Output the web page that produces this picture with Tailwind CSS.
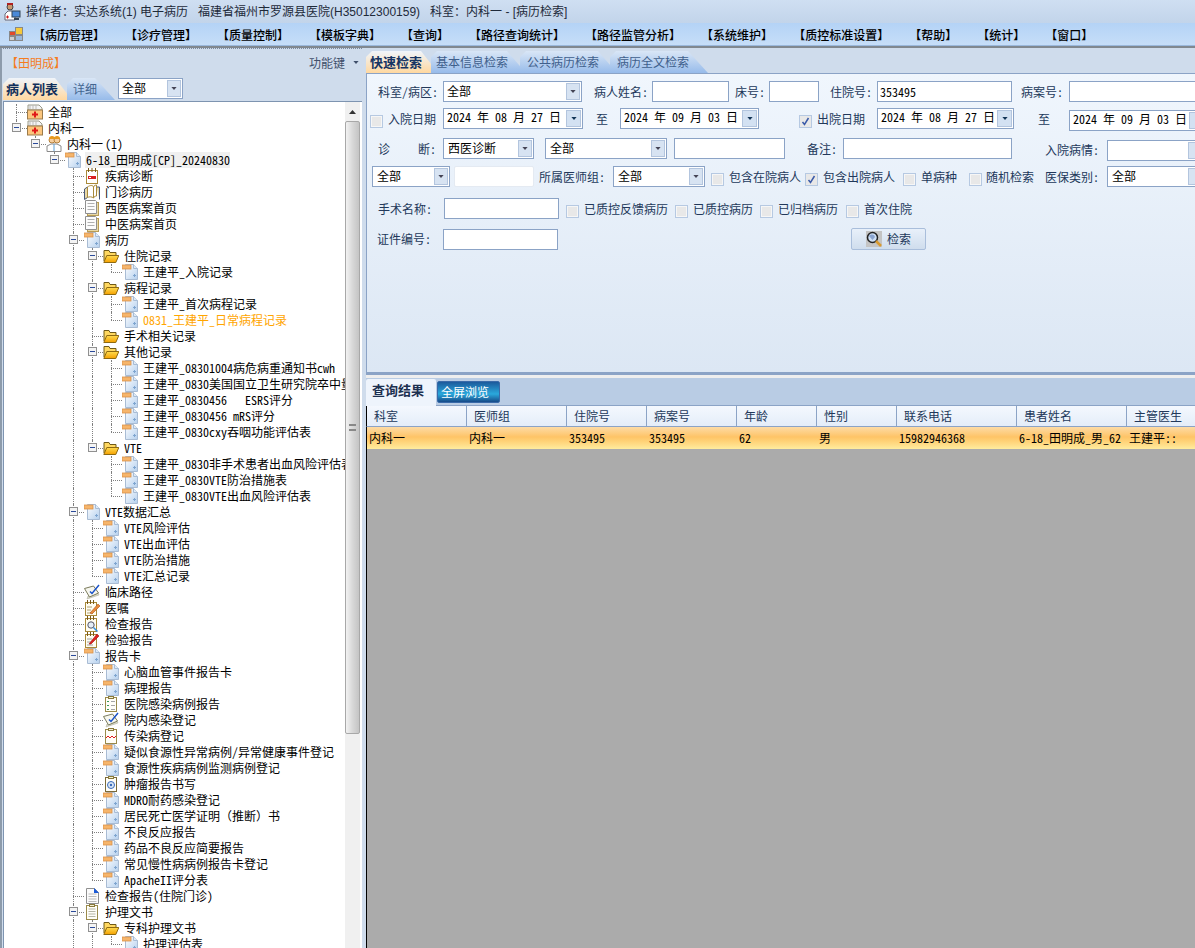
<!DOCTYPE html>
<html lang="zh-CN">
<head>
<meta charset="UTF-8">
<title>病历检索</title>
<script src="https://cdn.jsdelivr.net/npm/@tailwindcss/browser@4"></script>
</head>
<body class="w-[1195px] h-[948px] overflow-hidden font-['Noto_Sans_CJK_SC',sans-serif] [font-feature-settings:'hwid'] text-[12px] leading-4 text-black bg-[#cfdcec]">

<svg class="block w-0 h-0">
  <defs>
    <linearGradient id="pg" x1="0" y1="0" x2="1" y2="1"><stop offset="0" stop-color="#fff"/><stop offset="1" stop-color="#b5d0ee"/></linearGradient>
    <linearGradient id="fo" x1="0" y1="0" x2="0" y2="1"><stop offset="0" stop-color="#ffdc50"/><stop offset="1" stop-color="#f5a000"/></linearGradient>
    <symbol id="i-doc" viewBox="0 0 16 16"><path d="M3.500.5h8l4 4v11h-12z" fill="url(#pg)" stroke="#a9bcd4"/><path d="M11.500.5v4h4" fill="#dfeaf6" stroke="#a9bcd4"/><rect x="0" y="1" width="9" height="4" fill="#f6b56b" stroke="#d9924a" stroke-width=".8"/><path d="M11 11.500h3M12.500 10v3" stroke="#7fa5cf"/></symbol>
    <symbol id="i-folder" viewBox="0 0 16 16"><path d="M1 13V2.500h5l1 2h6V8" fill="#ffd860" stroke="#6f5a18"/><path d="M.8 14.500l3-7h12l-3 7z" fill="url(#fo)" stroke="#8f6a10"/></symbol>
    <symbol id="i-cross" viewBox="0 0 16 16"><path d="M1 6V1h11l3 3v2z" fill="#f4f4f4" stroke="#9a9a8a"/><path d="M3 1v4M6 1v4M9 1v4" stroke="#bbb"/><rect x=".5" y="6" width="15" height="9" fill="#fbc67e" stroke="#9a7a4a"/><path d="M8 7.500v6M5 10.500h6" stroke="#e01818" stroke-width="2"/></symbol>
    <symbol id="i-doctor" viewBox="0 0 16 16"><circle cx="6" cy="4" r="3" fill="#f6cf9f" stroke="#b5803a"/><path d="M3 3a3 3 0 0 1 6 0z" fill="#e79a1e"/><circle cx="11" cy="4" r="3" fill="#f6cf9f" stroke="#b5803a"/><path d="M8 3a3 3 0 0 1 6 0z" fill="#e79a1e"/><path d="M1 15.500V10l4-2h6l4 2v5.500z" fill="#fff" stroke="#8a8a8a"/><path d="M8 8v7" stroke="#5aa0d8"/></symbol>
    <symbol id="i-page" viewBox="0 0 16 16"><rect x="3.500" y="2.500" width="11" height="13" fill="#e9d9a6" stroke="#b89c55"/><path d="M1.500.5h10l1 1v12h-11z" fill="#fcfcfc" stroke="#8f8f8f"/><path d="M3.500 3.500h7M3.500 6.500h7M3.500 9.500h7" stroke="#b0b0b0"/></symbol>
    <symbol id="i-cal" viewBox="0 0 16 16"><rect x="2.500" y="2.500" width="11" height="13" fill="#fff" stroke="#a98a3a"/><path d="M4.500 0v4M8 0v4M11.500 0v4" stroke="#7a5a1a"/><rect x="4" y="8" width="8" height="3" fill="#d92020"/><path d="M5 9.500h2" stroke="#fff"/></symbol>
    <symbol id="i-book" viewBox="0 0 16 16"><path d="M.5 15.500V5l3-2v10.500zM15.500 15.500V3h-3" fill="#e8d8a8" stroke="#4a5a7a"/><path d="M3.500 3C6 1 9 1 9.500 3v11C8 12.500 5 12.500 3.500 13.500zM9.500 3c.5-2 3-2 3-2v11c-1 0-2.500.5-3 2z" fill="#fff" stroke="#a98a3a"/></symbol>
    <symbol id="i-check" viewBox="0 0 16 16"><path d="M3 15l12-4-1-2-10 3z" fill="#d8d8c8" stroke="#b5b5a5" stroke-width=".6"/><path d="M.5 4.500l9-2.500 5 7-9 4z" fill="#f7f7ef" stroke="#7a7a5a"/><path d="M6 7.500l2 2L15 1" fill="none" stroke="#1a52c8" stroke-width="1.500"/></symbol>
    <symbol id="i-note" viewBox="0 0 16 16"><rect x="1.500" y="2.500" width="11" height="13" fill="#fffdf2" stroke="#a98a3a"/><path d="M3.500 0v4M6.500 0v4M9.500 0v4" stroke="#7a5a1a"/><path d="M3 7h5M3 10h4M3 13h6" stroke="#b0a070"/><path d="M6 13l8-9 2 2-8 8z" fill="#e88a3a" stroke="#a9501a" stroke-width=".6"/></symbol>
    <symbol id="i-mag" viewBox="0 0 16 16"><rect x="1.500" y="2.500" width="11" height="13" fill="#fffdf2" stroke="#a98a3a"/><path d="M3.500 0v4M6.500 0v4M9.500 0v4" stroke="#7a5a1a"/><circle cx="7" cy="9" r="3.200" fill="#e4eef8" stroke="#556"/><path d="M9.500 11.500l4 4" stroke="#2f8fe0" stroke-width="1.500"/></symbol>
    <symbol id="i-lab" viewBox="0 0 16 16"><rect x="1.500" y="2.500" width="11" height="13" fill="#fffdf2" stroke="#a98a3a"/><path d="M3.500 0v4M6.500 0v4M9.500 0v4" stroke="#7a5a1a"/><path d="M3 7h5M3 10h4M3 13h6" stroke="#a0a0a0"/><path d="M5 12l8-10 2 2-8 8z" fill="#e02020" stroke="#a01010" stroke-width=".6"/></symbol>
    <symbol id="i-clip" viewBox="0 0 16 16"><rect x="2.500" y="1.500" width="11" height="14" fill="#fffef8" stroke="#9a8a4a"/><rect x="5.500" y=".5" width="5" height="2" fill="#f4f0d8" stroke="#8a7a3a"/><path d="M4.500 5h7M4.500 7.500h7M4.500 10h7M4.500 12.500h7" stroke="#b5b5a5"/></symbol>
    <symbol id="i-clipcheck" viewBox="0 0 16 16"><rect x="2.500" y="1.500" width="11" height="14" fill="#fffef8" stroke="#9a8a4a"/><rect x="5.500" y=".5" width="5" height="2" fill="#f4f0d8" stroke="#8a7a3a"/><path d="M4 5l1 1 1-1M4 9l1 1 1-1M4 13l1 1 1-1" fill="none" stroke="#3a9a5a"/><path d="M8 5.500h4M8 9.500h4M8 13.500h4" stroke="#a5a5a5"/></symbol>
    <symbol id="i-clipred" viewBox="0 0 16 16"><rect x="2.500" y="1.500" width="11" height="14" fill="#fffef8" stroke="#9a8a4a"/><rect x="5.500" y=".5" width="5" height="2" fill="#f4f0d8" stroke="#8a7a3a"/><path d="M3 10l2-2 2 2 2-2 2 2 2-2" fill="none" stroke="#e01818"/></symbol>
    <symbol id="i-clipblue" viewBox="0 0 16 16"><rect x="2.500" y="1.500" width="11" height="14" fill="#fffef8" stroke="#7a6a3a"/><rect x="5.500" y=".5" width="5" height="2" fill="#f4f0d8" stroke="#8a7a3a"/><circle cx="8" cy="9" r="3.500" fill="#dbe8f6" stroke="#3a6ab8"/><circle cx="8" cy="9" r="1.200" fill="#3a6ab8"/></symbol>
    <symbol id="i-file" viewBox="0 0 16 16"><path d="M2.500.5h8l4 4v11h-12z" fill="#fbfbfb" stroke="#8f8f8f"/><path d="M10 0l5 5h-5z" fill="#1a5ad8"/><path d="M4.500 6h8M4.500 8.500h8M4.500 11h8M4.500 13.500h8" stroke="#bbb"/></symbol>
    <symbol id="i-down" viewBox="0 0 7 4"><path d="M0 0h7L3.500 4z"/></symbol>
  </defs>
</svg>

<!-- 标题栏 -->
<header class="h-[23px] flex items-center bg-[linear-gradient(#cfdff2,#c2d4ea)]">
  <svg class="w-[18px] h-[18px] ml-[3px]" viewBox="0 0 18 18"><circle cx="7" cy="4" r="3" fill="#c89a70" stroke="#444"/><path d="M4 2h6V0H4z" fill="#b02020"/><path d="M2 17v-6l3-3h4l3 3v6z" fill="#fff" stroke="#667"/><rect x="9" y="8" width="8" height="6" fill="#4a8ad8" stroke="#345"/><path d="M11 16h5" stroke="#345" stroke-width="2"/><path d="M3 14h3M4.500 12.500v3" stroke="#d01818"/></svg>
  <span class="ml-[5px] font-['Liberation_Sans','Noto_Sans_CJK_SC',sans-serif] [font-feature-settings:normal] text-[#1e2a3a] whitespace-pre">操作者：实达系统(1) 电子病历   福建省福州市罗源县医院(H35012300159)   科室：内科一 - [病历检索]</span>
</header>

<!-- 菜单栏 -->
<nav class="h-[23px] flex items-center bg-[linear-gradient(#b4d3f6,#c6def8)] border-b border-[#9ab8dc]">
  <svg class="w-[14px] h-[14px] ml-[9px] shrink-0" viewBox="0 0 14 14"><rect x=".5" y="4.500" width="6" height="4" fill="#e04a2a" stroke="#888"/><rect x="6.500" y=".5" width="7" height="7" fill="#f6c93a" stroke="#888"/><rect x=".5" y="9.500" width="5" height="4" fill="#cfcfcf" stroke="#888"/><rect x="6.500" y="8.500" width="7" height="5" fill="#9ab8dc" stroke="#888"/></svg>
  <div class="flex gap-5 ml-[10px] pt-[2px] font-medium text-black whitespace-nowrap">
    <span>【病历管理】</span><span>【诊疗管理】</span><span>【质量控制】</span><span>【模板字典】</span><span>【查询】</span><span>【路径查询统计】</span><span>【路径监管分析】</span><span>【系统维护】</span><span>【质控标准设置】</span><span>【帮助】</span><span>【统计】</span><span>【窗口】</span>
  </div>
</nav>

<main class="h-[902px] flex border-t-2 border-[#808890]">
  <!-- 左侧病人列表 -->
  <aside class="w-[362px] shrink-0 flex flex-col pl-px bg-[#cfdcec] border-l-2 border-[#8d9bab]">
    <div class="h-[28px] flex items-center justify-between border-t border-dotted border-[#7a8aa0] pr-[3px]">
      <span class="text-[#f57c1f] ml-[3px]">【田明成】</span>
      <span class="text-[#3f4f6a] flex items-center gap-[8px]">功能键<svg class="w-[6px] h-[3px] fill-[#3f4f6a]"><use href="#i-down"/></svg></span>
    </div>
    <div class="h-[25px] flex items-start">
      <div class="w-[69px] h-[22px] mt-[2px] pl-[3px] leading-[21px] text-[13px] font-bold text-[#12305a] bg-[linear-gradient(#f0f5fb,#ffd8a0)] [clip-path:polygon(0_100%,0_6px,6px_0,52px_0,69px_100%)]">病人列表</div>
      <div class="w-[48px] h-[22px] mt-[2px] -ml-[5px] pl-[6px] leading-[21px] text-[#44658f] bg-[linear-gradient(#d9e6f6,#97bbea)] [clip-path:polygon(0_100%,0_6px,6px_0,28px_0,48px_100%)]">详细</div>
      <div class="mt-[2px] ml-[3px] w-[65px] h-[21px] flex items-center justify-between bg-white border border-[#8ba3c6] pl-[3px] pr-px"><span class="-mt-[2px]">全部</span><span class="w-[14px] h-[17px] flex items-center justify-center bg-[#d7e3f2] border border-[#b3c5de]"><svg class="w-[6px] h-[3px] fill-[#445]"><use href="#i-down"/></svg></span></div>
    </div>
    <div class="flex-1 flex min-h-0 bg-white border border-[#7e94b0] border-b-0 -mr-px">
      <div id="tree" class="w-[341px] shrink-0 overflow-hidden pt-[2px]"></div>
      <div class="w-[15px] shrink-0 flex flex-col bg-[#f0f0f0]">
        <div class="h-[19px] flex items-center justify-center"><svg class="w-[7px] h-[4px] fill-[#333] rotate-180"><use href="#i-down"/></svg></div>
        <div class="h-[613px] flex items-center justify-center bg-[linear-gradient(90deg,#f2f2f2,#d8d8d8_50%,#c4c4c4)] border border-[#a8a8a8] rounded-[2px]"><span class="w-[7px] h-[7px] border-y-2 border-[#888]"></span></div>
      </div>
    </div>
  </aside>
  <div class="w-[4px] shrink-0 bg-[#cfdcec]"></div>

  <!-- 右侧检索 -->
  <section class="flex-1 min-w-0 flex flex-col overflow-hidden">
    <div class="h-[25px] flex items-end bg-[#cfdcec]">
      <div class="w-[72px] h-[22px] pl-[4px] leading-[21px] font-bold text-[#163462] text-[13px] bg-[linear-gradient(#f0f5fb,#ffd8a0)] [clip-path:polygon(0_100%,0_6px,6px_0,55px_0,72px_100%)]">快速检索</div>
      <div class="w-[95px] h-[22px] -ml-[7px] pl-[5px] leading-[21px] text-[#3f5f8c] bg-[linear-gradient(#d9e6f6,#97bbea)] [clip-path:polygon(0_100%,0_6px,6px_0,76px_0,95px_100%)]">基本信息检索</div>
      <div class="w-[97px] h-[22px] -ml-[6px] pl-[7px] leading-[21px] text-[#3f5f8c] bg-[linear-gradient(#d9e6f6,#97bbea)] [clip-path:polygon(0_100%,0_6px,6px_0,78px_0,97px_100%)]">公共病历检索</div>
      <div class="w-[98px] h-[22px] -ml-[7px] pl-[7px] leading-[21px] text-[#3f5f8c] bg-[linear-gradient(#d9e6f6,#97bbea)] [clip-path:polygon(0_100%,0_6px,6px_0,78px_0,98px_100%)]">病历全文检索</div>
    </div>

    <form class="h-[300px] shrink-0 pt-[7px] text-[#22385a] bg-[linear-gradient(#f0f6fd,#dce7f4)] border border-[#8ba3c6] border-r-0 overflow-hidden">
      <!-- 第一行 -->
      <div class="flex items-center h-[21px] [&>*]:shrink-0">
        <label class="ml-[11px] w-[65px]">科室/病区:</label>
        <div class="w-[139px] h-[21px] flex items-center justify-between bg-white border border-[#8ba3c6] pl-[3px] pr-px text-black"><span class="-mt-[2px]">全部</span><span class="w-[14px] h-[17px] flex items-center justify-center bg-[#d7e3f2] border border-[#b3c5de]"><svg class="w-[6px] h-[3px] fill-[#445]"><use href="#i-down"/></svg></span></div>
        <label class="ml-[12px] w-[58px]">病人姓名:</label>
        <input class="w-[77px] h-[21px] bg-white border border-[#8ba3c6]">
        <label class="ml-[6px] w-[34px]">床号:</label>
        <input class="w-[50px] h-[21px] bg-white border border-[#8ba3c6]">
        <label class="ml-[11px] w-[47px]">住院号:</label>
        <input class="w-[135px] h-[21px] bg-white border border-[#8ba3c6] px-[2px] text-black" value="353495">
        <label class="ml-[9px] w-[48px]">病案号:</label>
        <input class="w-[200px] h-[21px] bg-white border border-[#8ba3c6]">
      </div>
      <!-- 第二行 -->
      <div class="flex items-center h-[21px] mt-[6px] [&>*]:shrink-0">
        <span class="ml-[3px] w-[13px] h-[13px] mt-[6px] border border-[#b6c9e2] bg-[#e8e8e8] shadow-[inset_0_0_0_1px_#f6f6f6]"></span>
        <label class="ml-[5px] w-[55px]">入院日期</label>
        <div class="w-[140px] h-[21px] flex items-center justify-between bg-white border border-[#8ba3c6] pl-[3px] pr-px text-black whitespace-pre"><span class="-mt-[3px]">2024 年 08 月 27 日</span><span class="w-[15px] h-[17px] flex items-center justify-center bg-[#d3e1f2] border border-[#b3c5de]"><svg class="w-[6px] h-[3px] fill-[#123456]"><use href="#i-down"/></svg></span></div>
        <label class="ml-[13px] w-[24px]">至</label>
        <div class="w-[139px] h-[21px] flex items-center justify-between bg-white border border-[#8ba3c6] pl-[3px] pr-px text-black whitespace-pre"><span class="-mt-[3px]">2024 年 09 月 03 日</span><span class="w-[15px] h-[17px] flex items-center justify-center bg-[#d3e1f2] border border-[#b3c5de]"><svg class="w-[6px] h-[3px] fill-[#123456]"><use href="#i-down"/></svg></span></div>
        <span class="ml-[40px] w-[13px] h-[13px] mt-[6px] flex items-center justify-center border border-[#b6c9e2] bg-[#e8e8e8]"><svg class="w-[9px] h-[9px]" viewBox="0 0 9 9"><path d="M1.500 5l2 2.500L7.500 1" fill="none" stroke="#3a5aa8" stroke-width="1.500"/></svg></span>
        <label class="ml-[5px] w-[60px]">出院日期</label>
        <div class="w-[137px] h-[21px] flex items-center justify-between bg-white border border-[#8ba3c6] pl-[3px] pr-px text-black whitespace-pre"><span class="-mt-[3px]">2024 年 08 月 27 日</span><span class="w-[15px] h-[17px] flex items-center justify-center bg-[#d3e1f2] border border-[#b3c5de]"><svg class="w-[6px] h-[3px] fill-[#123456]"><use href="#i-down"/></svg></span></div>
        <label class="ml-[24px] w-[31px]">至</label>
        <div class="w-[136px] h-[21px] mt-[3px] flex items-center justify-between bg-white border border-[#8ba3c6] pl-[3px] text-black whitespace-pre"><span class="-mt-[3px]">2024 年 09 月 03 日</span><span class="w-[15px] h-[17px] flex items-center justify-center bg-[#d3e1f2] border border-[#b3c5de]"></span></div>
      </div>
      <!-- 第三行 -->
      <div class="flex items-center h-[21px] mt-[9px] [&>*]:shrink-0">
        <label class="ml-[11px] w-[65px]">诊<span class="ml-[28px]">断:</span></label>
        <div class="w-[91px] h-[21px] flex items-center justify-between bg-white border border-[#8ba3c6] pl-[4px] pr-px text-black"><span class="-mt-[2px]">西医诊断</span><span class="w-[14px] h-[17px] flex items-center justify-center bg-[#d7e3f2] border border-[#b3c5de]"><svg class="w-[6px] h-[3px] fill-[#445]"><use href="#i-down"/></svg></span></div>
        <div class="ml-[11px] w-[122px] h-[21px] flex items-center justify-between bg-white border border-[#8ba3c6] pl-[4px] pr-px text-black"><span class="-mt-[2px]">全部</span><span class="w-[14px] h-[17px] flex items-center justify-center bg-[#d7e3f2] border border-[#b3c5de]"><svg class="w-[6px] h-[3px] fill-[#445]"><use href="#i-down"/></svg></span></div>
        <input class="ml-[7px] w-[111px] h-[21px] bg-white border border-[#8ba3c6]">
        <label class="ml-[22px] w-[36px]">备注:</label>
        <input class="w-[169px] h-[21px] bg-white border border-[#8ba3c6]">
        <label class="ml-[33px] w-[62px] mt-[3px]">入院病情:</label>
        <div class="w-[96px] h-[21px] mt-[4px] flex items-center justify-end bg-white border border-[#8ba3c6]"><span class="w-[14px] h-[17px] bg-[#d7e3f2] border border-[#b3c5de]"></span></div>
      </div>
      <!-- 第四行 -->
      <div class="flex items-center h-[21px] mt-[7px] [&>*]:shrink-0">
        <div class="ml-[5px] w-[78px] h-[21px] flex items-center justify-between bg-white border border-[#8ba3c6] pl-[4px] pr-px text-black"><span class="-mt-[2px]">全部</span><span class="w-[14px] h-[17px] flex items-center justify-center bg-[#d7e3f2] border border-[#b3c5de]"><svg class="w-[6px] h-[3px] fill-[#445]"><use href="#i-down"/></svg></span></div>
        <input class="ml-[4px] w-[80px] h-[21px] bg-white border border-[#e4eaf2] rounded-[2px]">
        <label class="ml-[5px] w-[74px]">所属医师组:</label>
        <div class="w-[92px] h-[21px] flex items-center justify-between bg-white border border-[#8ba3c6] pl-[4px] pr-px text-black"><span class="-mt-[2px]">全部</span><span class="w-[14px] h-[17px] flex items-center justify-center bg-[#d7e3f2] border border-[#b3c5de]"><svg class="w-[6px] h-[3px] fill-[#445]"><use href="#i-down"/></svg></span></div>
        <span class="ml-[6px] w-[13px] h-[13px] mt-[6px] border border-[#b6c9e2] bg-[#e8e8e8] shadow-[inset_0_0_0_1px_#f6f6f6]"></span>
        <label class="ml-[5px] w-[72px]">包含在院病人</label>
        <span class="ml-[4px] w-[13px] h-[13px] mt-[6px] flex items-center justify-center border border-[#b6c9e2] bg-[#e8e8e8]"><svg class="w-[9px] h-[9px]" viewBox="0 0 9 9"><path d="M1.500 5l2 2.500L7.500 1" fill="none" stroke="#3a5aa8" stroke-width="1.500"/></svg></span>
        <label class="ml-[5px] w-[72px]">包含出院病人</label>
        <span class="ml-[8px] w-[13px] h-[13px] mt-[6px] border border-[#b6c9e2] bg-[#e8e8e8] shadow-[inset_0_0_0_1px_#f6f6f6]"></span>
        <label class="ml-[5px] w-[36px]">单病种</label>
        <span class="ml-[12px] w-[13px] h-[13px] mt-[6px] border border-[#b6c9e2] bg-[#e8e8e8] shadow-[inset_0_0_0_1px_#f6f6f6]"></span>
        <label class="ml-[4px] w-[48px]">随机检索</label>
        <label class="ml-[11px] w-[62px]">医保类别:</label>
        <div class="w-[96px] h-[21px] flex items-center justify-between bg-white border border-[#8ba3c6] pl-[4px] text-black"><span class="-mt-[2px]">全部</span><span class="w-[14px] h-[17px] bg-[#d7e3f2] border border-[#b3c5de]"></span></div>
      </div>
      <!-- 第五行 -->
      <div class="flex items-center h-[21px] mt-[11px] [&>*]:shrink-0">
        <label class="ml-[11px] w-[66px]">手术名称:</label>
        <input class="w-[115px] h-[21px] bg-white border border-[#8ba3c6]">
        <span class="ml-[7px] w-[13px] h-[13px] mt-[5px] border border-[#b6c9e2] bg-[#e8e8e8] shadow-[inset_0_0_0_1px_#f6f6f6]"></span>
        <label class="ml-[5px] w-[84px]">已质控反馈病历</label>
        <span class="ml-[7px] w-[13px] h-[13px] mt-[5px] border border-[#b6c9e2] bg-[#e8e8e8] shadow-[inset_0_0_0_1px_#f6f6f6]"></span>
        <label class="ml-[5px] w-[60px]">已质控病历</label>
        <span class="ml-[7px] w-[13px] h-[13px] mt-[5px] border border-[#b6c9e2] bg-[#e8e8e8] shadow-[inset_0_0_0_1px_#f6f6f6]"></span>
        <label class="ml-[5px] w-[60px]">已归档病历</label>
        <span class="ml-[8px] w-[13px] h-[13px] mt-[5px] border border-[#b6c9e2] bg-[#e8e8e8] shadow-[inset_0_0_0_1px_#f6f6f6]"></span>
        <label class="ml-[5px] w-[48px]">首次住院</label>
      </div>
      <!-- 第六行 -->
      <div class="flex items-center h-[22px] mt-[9px] [&>*]:shrink-0">
        <label class="ml-[10px] w-[66px]">证件编号:</label>
        <input class="w-[115px] h-[21px] bg-white border border-[#8ba3c6]">
        <button type="button" class="ml-[293px] w-[75px] h-[22px] flex items-center justify-center gap-[5px] rounded-[2px] border border-[#a9bedb] bg-[linear-gradient(#e8f0fa,#cfdded)]">
          <svg class="w-4 h-4" viewBox="0 0 16 16"><rect width="16" height="16" fill="#c4c4c4"/><circle cx="6.500" cy="6.500" r="5" fill="#cfe0f5" stroke="#222" stroke-width="1.500"/><path d="M3 5c2-2 5-2 6 1L6.500 9z" fill="#8aa4d0"/><path d="M10 10l5 5" stroke="#d89a30" stroke-width="2.500"/></svg>
          <span class="text-[#22385a]">检索</span>
        </button>
      </div>
    </form>

    <div class="h-[2px] shrink-0 bg-[#8ba3c6]"></div>
    <div class="h-[3px] shrink-0 bg-[#eeeeee]"></div>

    <div class="h-[28px] shrink-0 flex items-start bg-[#b9cce4] border-b border-[#8ba3c6]">
      <div class="w-[70px] h-[27px] mt-px pl-[6px] leading-[22px] text-[13px] font-bold text-[#1c3050] bg-[#eef4fc] rounded-t-[2px]">查询结果</div>
      <div class="ml-px mt-[3px] w-[63px] h-[22px] leading-[19px] pl-[3px] text-white rounded-[2px] border border-[#3a6aa8] bg-[linear-gradient(#1c5a9c,#2aa8dc_60%,#174a88)]">全屏浏览</div>
    </div>

    <div class="h-[21px] shrink-0 flex text-[#22385a] bg-[linear-gradient(#f4f8fe,#e4edf9)] border-b border-[#8ba3c6] border-l border-l-black leading-[20px] [&>*]:shrink-0 [&>*]:pl-[7px] [&>*]:border-r [&>*]:border-[#8ba3c6] whitespace-nowrap">
      <div class="w-[100px]">科室</div><div class="w-[100px]">医师组</div><div class="w-[80px]">住院号</div><div class="w-[90px]">病案号</div><div class="w-[80px]">年龄</div><div class="w-[80px]">性别</div><div class="w-[120px]">联系电话</div><div class="w-[110px]">患者姓名</div><div class="w-[70px]">主管医生</div>
    </div>
    <div class="h-[22px] shrink-0 flex leading-[21px] bg-[linear-gradient(#fddba6,#fec467_45%,#ffd277_65%,#ffec9e)] border-l border-l-black [&>*]:shrink-0 [&>*]:pl-[2px] whitespace-nowrap">
      <div class="w-[100px]">内科一</div><div class="w-[100px]">内科一</div><div class="w-[80px]">353495</div><div class="w-[90px]">353495</div><div class="w-[80px]">62</div><div class="w-[80px]">男</div><div class="w-[120px]">15982946368</div><div class="w-[110px]">6-18_田明成_男_62</div><div class="w-[70px]">王建平::</div>
    </div>
    <div class="flex-1 bg-[#ababab] border-l border-l-black"></div>
  </section>
</main>

<script>
  // 病历树: [层级, 图标, 文字, 展开, 颜色]
  const rows = [
    [0,'cross','全部'],[0,'cross','内科一',1],[1,'doctor','内科一<span class="ml-[2px]">(1)</span>',1],[2,'doc','6-18_田明成[CP]_20240830',1,'sel'],
    [3,'cal','疾病诊断'],[3,'book','门诊病历'],[3,'page','西医病案首页'],[3,'page','中医病案首页'],[3,'doc','病历',1],
    [4,'folder','住院记录',1],[5,'doc','王建平_入院记录'],
    [4,'folder','病程记录',1],[5,'doc','王建平_首次病程记录'],[5,'doc','0831_王建平_日常病程记录',0,'on'],
    [4,'folder','手术相关记录'],[4,'folder','其他记录',1],
    [5,'doc','王建平_08301004病危病重通知书cwh'],[5,'doc','王建平_0830美国国立卫生研究院卒中量表'],[5,'doc','王建平_0830456   ESRS评分'],[5,'doc','王建平_0830456 mRS评分'],[5,'doc','王建平_0830cxy吞咽功能评估表'],
    [4,'folder','VTE',1],[5,'doc','王建平_0830非手术患者出血风险评估表'],[5,'doc','王建平_0830VTE防治措施表'],[5,'doc','王建平_0830VTE出血风险评估表'],
    [3,'doc','VTE数据汇总',1],[4,'doc','VTE风险评估'],[4,'doc','VTE出血评估'],[4,'doc','VTE防治措施'],[4,'doc','VTE汇总记录'],
    [3,'check','临床路径'],[3,'note','医嘱'],[3,'mag','检查报告'],[3,'lab','检验报告'],[3,'doc','报告卡',1],
    [4,'doc','心脑血管事件报告卡'],[4,'doc','病理报告'],[4,'clipcheck','医院感染病例报告'],[4,'check','院内感染登记'],[4,'clipred','传染病登记'],
    [4,'doc','疑似食源性异常病例/异常健康事件登记'],[4,'doc','食源性疾病病例监测病例登记'],[4,'clipblue','肿瘤报告书写'],[4,'doc','MDRO耐药感染登记'],[4,'doc','居民死亡医学证明<span class="[font-feature-settings:normal]">（推断）</span>书'],
    [4,'doc','不良反应报告'],[4,'doc','药品不良反应简要报告'],[4,'doc','常见慢性病病例报告卡登记'],[4,'doc','ApacheII评分表'],
    [3,'file','检查报告(住院门诊)'],[3,'clip','护理文书',1],[4,'folder','专科护理文书',1],[5,'doc','护理评估表']
  ];
  // 该层级后面是否还有同级节点(最后几层在屏幕外还有内容)
  const hasNext = (i, k) => {
    for (let j = i + 1; j < rows.length; j++) {
      if (rows[j][0] < k) return false;
      if (rows[j][0] === k) return true;
    }
    return k >= 3 && k < 5;
  };
  let html = '';
  rows.forEach(([d, icon, text, open, state], i) => {
    let cells = '';
    for (let k = 0; k < d; k++) {
      const line = hasNext(i, k) ? '<span class="absolute left-0 top-0 h-4 border-l border-dotted border-[#808080]"></span>' : '';
      cells += '<span class="relative w-[19px] h-4 shrink-0">' + line + '</span>';
    }
    const down = hasNext(i, d) ? 'h-4' : 'h-[8px]';
    const box = open ? '<span class="absolute -left-1 top-[3px] w-[9px] h-[9px] flex items-center justify-center bg-[#f4f4f4] border border-[#909090]"><span class="w-[5px] h-px bg-[#2a4a9a]"></span></span>' : '';
    const color = state === 'on' ? 'text-[#ffa500]' : 'text-black';
    const bg = state === 'sel' ? 'bg-[#f0f0f0]' : '';
    html += '<div class="flex h-4 items-center pl-[12px] whitespace-pre">' + cells
      + '<span class="relative w-[11px] h-4 shrink-0"><span class="absolute left-0 top-0 ' + down + ' border-l border-dotted border-[#808080]"></span><span class="absolute left-0 top-[8px] w-[11px] border-t border-dotted border-[#808080]"></span>' + box + '</span>'
      + '<svg class="w-4 h-4 shrink-0"><use href="#i-' + icon + '"/></svg>'
      + '<span class="ml-[4px] pl-px ' + color + ' ' + bg + '">' + text + '</span></div>';
  });
  document.getElementById('tree').innerHTML = html;
</script>
</body>
</html>
